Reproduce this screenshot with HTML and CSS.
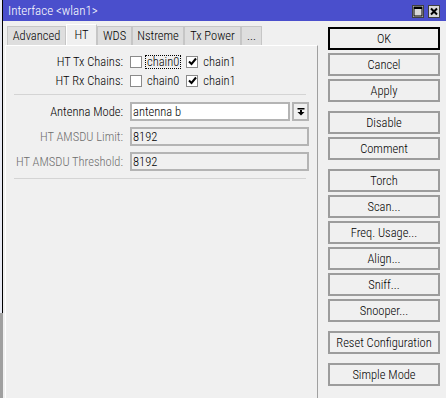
FILE: index.html
```html
<!DOCTYPE html>
<html>
<head>
<meta charset="utf-8">
<link rel="stylesheet" href="styles.css">
</head>
<body>
<div class="screen">
  <div class="edge"><div class="edge-top"></div><div class="edge-bottom"></div></div>
  <div class="window">
    <div class="titlebar">
      <span class="title">Interface &lt;wlan1&gt;</span>
      <div class="tb-btns">
        <span class="tb-btn"><svg width="10" height="11" viewBox="0 0 10 11"><rect x="1" y="1" width="8" height="9" fill="none" stroke="#000" stroke-width="1"/><rect x="1" y="1" width="8" height="2" fill="#000"/></svg></span>
        <span class="tb-btn"><svg width="10" height="11" viewBox="0 0 10 11"><path d="M2 2.5 L8 8.5 M8 2.5 L2 8.5" stroke="#000" stroke-width="2"/></svg></span>
      </div>
    </div>
    <div class="wbody">
      <div class="main">
        <div class="tabs">
          <div class="tab w-adv">Advanced</div>
          <div class="tab sel w-ht">HT</div>
          <div class="tab w-wds">WDS</div>
          <div class="tab w-nst">Nstreme</div>
          <div class="tab w-txp">Tx Power</div>
          <div class="tab w-more">...</div>
        </div>
        <div class="panel">
          <div class="row chk-row">
            <div class="label">HT Tx Chains:</div>
            <div class="check"><span class="box"></span><span class="ctext focus">chain0</span></div>
            <div class="check"><span class="box checked"><svg width="9" height="9" viewBox="0 0 9 9"><path d="M1 4.5 L3.5 7 L8 1.5" fill="none" stroke="#000" stroke-width="2"/></svg></span><span class="ctext">chain1</span></div>
          </div>
          <div class="row chk-row">
            <div class="label">HT Rx Chains:</div>
            <div class="check"><span class="box"></span><span class="ctext">chain0</span></div>
            <div class="check"><span class="box checked"><svg width="9" height="9" viewBox="0 0 9 9"><path d="M1 4.5 L3.5 7 L8 1.5" fill="none" stroke="#000" stroke-width="2"/></svg></span><span class="ctext">chain1</span></div>
          </div>
          <div class="sep sep1"></div>
          <div class="row in-row">
            <div class="label">Antenna Mode:</div>
            <div class="input white ant">antenna b</div>
            <div class="drop"><svg width="8" height="8" viewBox="0 0 8 8"><rect x="0.5" y="0" width="7" height="1.5" fill="#000"/><rect x="3" y="2" width="2" height="2" fill="#000"/><path d="M0.5 4 L7.5 4 L4 7.5 Z" fill="#000"/></svg></div>
          </div>
          <div class="row in-row">
            <div class="label dim">HT AMSDU Limit:</div>
            <div class="input full">8192</div>
          </div>
          <div class="row in-row">
            <div class="label dim">HT AMSDU Threshold:</div>
            <div class="input full">8192</div>
          </div>
          <div class="sep sep2"></div>
        </div>
      </div>
      <div class="buttons">
        <div class="btn default">OK</div>
        <div class="btn">Cancel</div>
        <div class="btn">Apply</div>
        <div class="btn group">Disable</div>
        <div class="btn">Comment</div>
        <div class="btn group">Torch</div>
        <div class="btn">Scan...</div>
        <div class="btn">Freq. Usage...</div>
        <div class="btn">Align...</div>
        <div class="btn">Sniff...</div>
        <div class="btn">Snooper...</div>
        <div class="btn group">Reset Configuration</div>
        <div class="btn group">Simple Mode</div>
      </div>
    </div>
  </div>
</div>
</body>
</html>
```
FILE: styles.css
```css
* { box-sizing: border-box; }
body {
  margin: 0;
  font-family: "Roboto", "Liberation Sans", sans-serif;
  font-stretch: 75%;
  font-weight: 350;
  font-size: 12.5px;
  color: #000;
}
.screen {
  display: flex;
  width: 446px;
  height: 398px;
  overflow: hidden;
  background: #f0f0f0;
}
.edge {
  width: 3px;
  display: flex;
  flex-direction: column;
}
.edge-top {
  height: 313px;
  background: #e8eaf4;
  border-right: 1px solid #000;
}
.edge-bottom {
  flex: 1;
  background: #a0a0a0;
}
.window {
  flex: 1;
  display: flex;
  flex-direction: column;
  background: #f0f0f0;
}
.titlebar {
  height: 21px;
  background: #4a4fcc;
  display: flex;
  align-items: center;
  padding: 0 6px 0 5px;
  color: #fff;
}
.title { line-height: 21px; font-size: 13px; }
.tb-btns {
  margin-left: auto;
  display: flex;
  gap: 4px;
  padding-top: 1px;
}
.tb-btn {
  width: 12px;
  height: 13px;
  background: #d8d8d8;
  border: 1px solid #404040;
  display: flex;
  align-items: center;
  justify-content: center;
}
.tb-btn svg { display: block; }
.wbody {
  flex: 1;
  display: flex;
  padding: 3px 6px 0 2px;
  gap: 10px;
}
.main {
  width: 313px;
  display: flex;
  flex-direction: column;
}
.tabs {
  display: flex;
  align-items: flex-end;
  height: 21px;
  padding-left: 2px;
}
.tab {
  height: 19px;
  line-height: 17px;
  text-align: center;
  background: #dedede;
  border: 1px solid #c6c6c6;
  border-bottom: none;
  flex: none;
}
.tab.sel {
  height: 22px;
  line-height: 19px;
  background: #f0f0f0;
  border-color: #fff #c6c6c6 transparent #fff;
  margin-bottom: -1px;
}
.w-adv { width: 59px; }
.w-ht { width: 31px; }
.w-wds { width: 35px; }
.w-nst { width: 52px; }
.w-txp { width: 57px; }
.w-more { width: 21px; }
.panel {
  flex: 1;
  border-left: 1px solid #fff;
  border-top: 1px solid #fff;
  border-right: 1px solid #a0a0a0;
  padding: 6px 8px 0 0;
  display: flex;
  flex-direction: column;
}
.row {
  display: flex;
  align-items: center;
}
.chk-row { height: 19px; }
.in-row { height: 19px; margin-bottom: 6px; }
.label {
  width: 117px;
  margin-right: 7px;
  text-align: right;
  white-space: nowrap;
}
.label.dim { color: #6e6e6e; }
.check {
  display: flex;
  align-items: center;
  margin-right: 5px;
}
.box {
  width: 12px;
  height: 12px;
  background: #fff;
  border: 1px solid #8a8a8a;
  display: flex;
  align-items: center;
  justify-content: center;
}
.ctext {
  margin-left: 3px;
  padding: 0 1px;
  border: 1px dotted transparent;
  line-height: 12px;
}
.ctext.focus { border-color: #000; }
.sep {
  height: 1px;
  background: #d4d4d4;
  margin-left: 8px;
  margin-right: 3px;
}
.sep1 { margin-top: 4px; margin-bottom: 7px; }
.sep2 { margin-top: 1px; }
.input {
  height: 19px;
  border: 2px solid #b4b4b4;
  padding-left: 1px;
  line-height: 15px;
  background: #f0f0f0;
}
.input.white { background: #fff; }
.ant { width: 160px; }
.full { flex: 1; }
.drop {
  width: 17px;
  height: 19px;
  margin-left: 2px;
  border: 2px solid #b4b4b4;
  background: #f0f0f0;
  display: flex;
  align-items: center;
  justify-content: center;
}
.drop svg { display: block; }
.buttons {
  width: 112px;
  display: flex;
  flex-direction: column;
  gap: 3px;
  padding-top: 3px;
}
.btn {
  height: 23px;
  border: 2px solid #9c9c9c;
  background: #f0f0f0;
  text-align: center;
  line-height: 19px;
  white-space: nowrap;
}
.btn.default { border-color: #000; }
.btn.group { margin-top: 6px; }
```
